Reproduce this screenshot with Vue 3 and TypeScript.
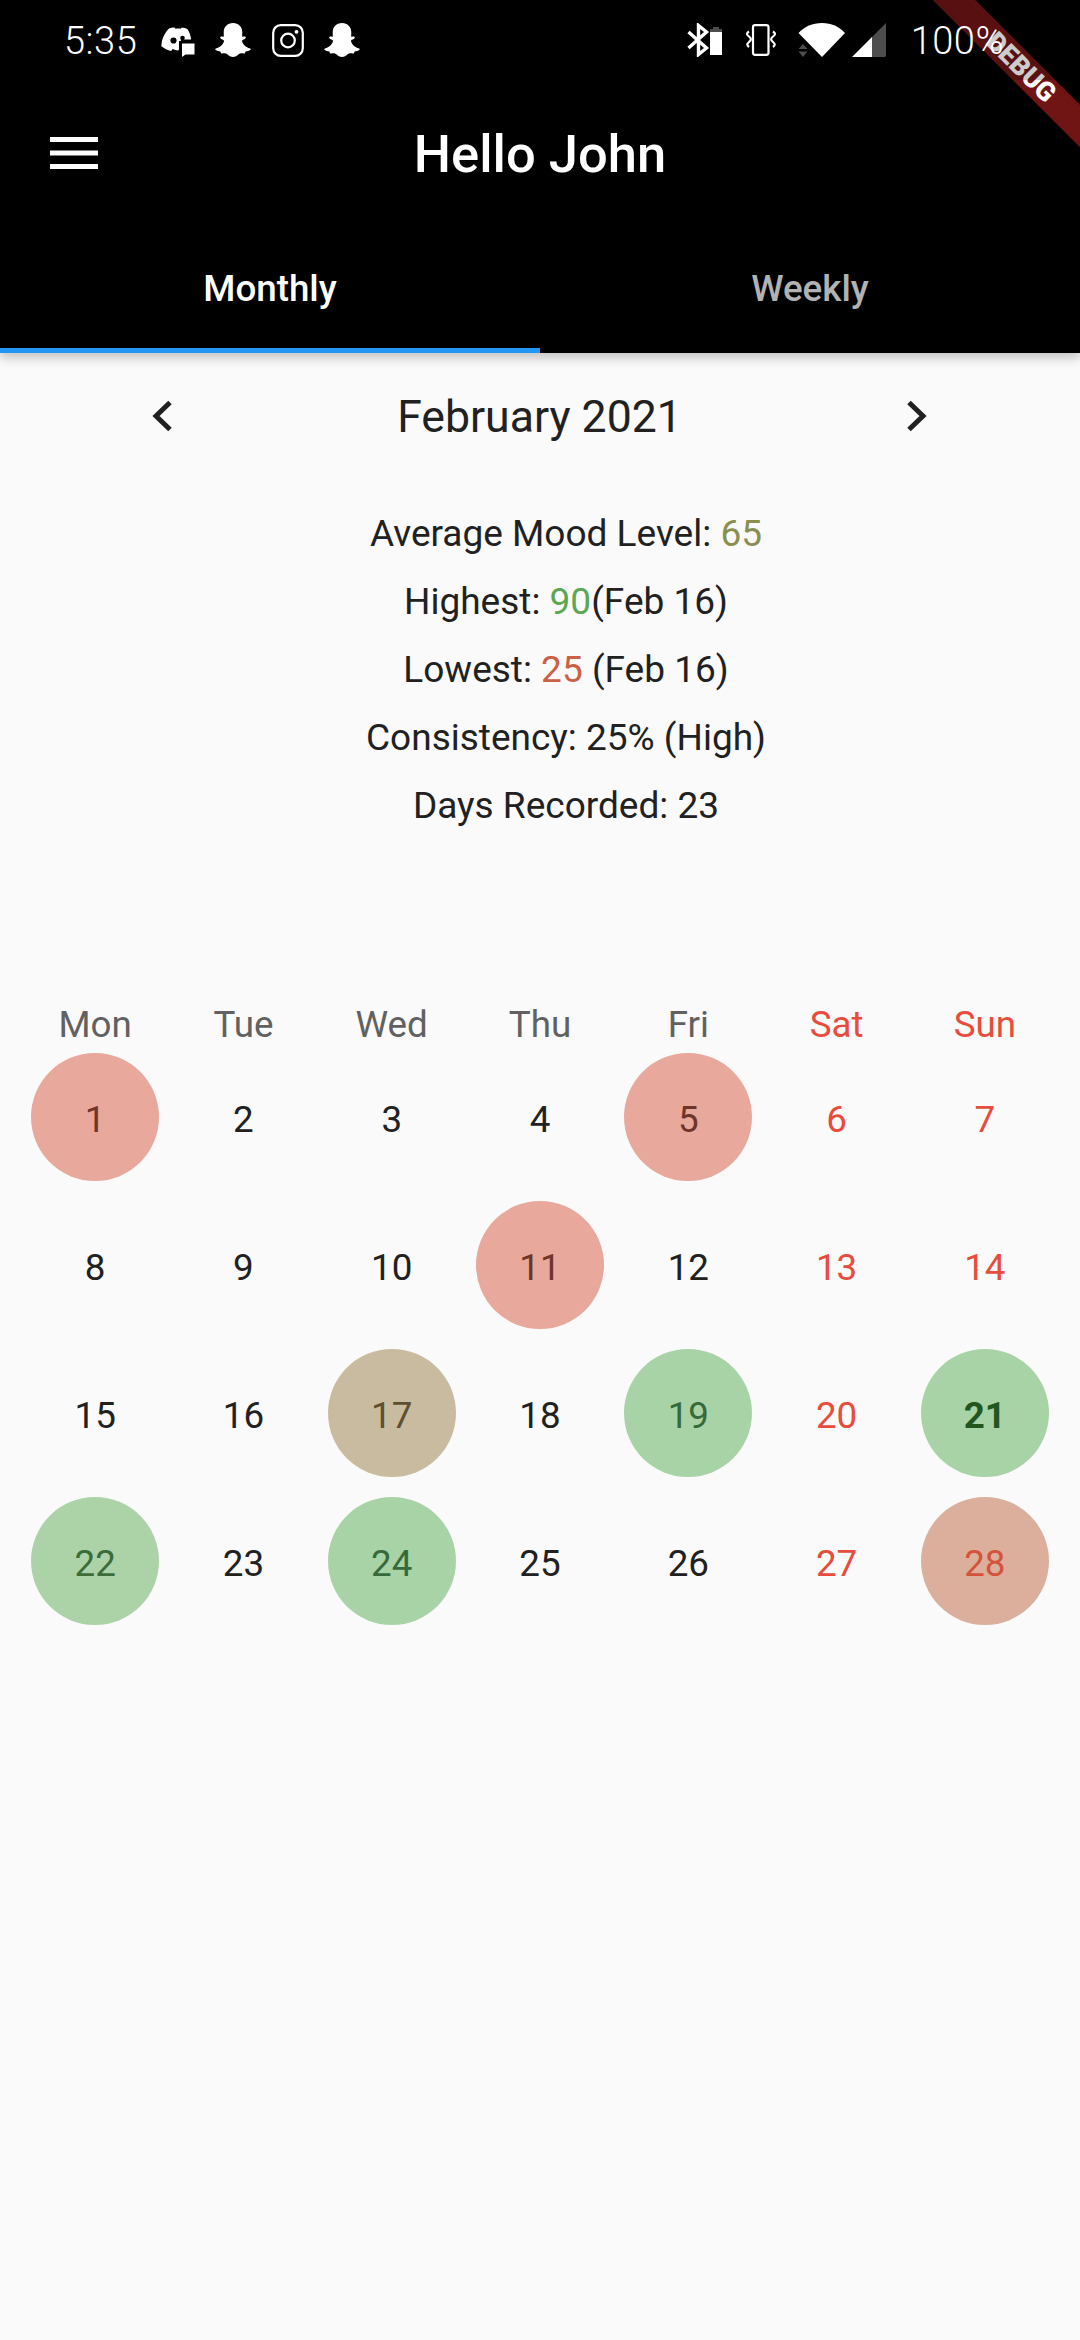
<template>
  <div class="screen">
    <header class="top">
      <div class="status">
        <span class="clock">5:35</span>
        <svg class="ic-discord" viewBox="0 0 34 30">
          <path fill="#fff" d="M8 1.500c3-1.200 5-1.300 6-.6l.4.9c2-.3 3.400-.3 5.400 0l.4-.9c1.500-.4 4 .1 6.300 1.300 2 3 3.200 6.500 3.600 10.300H20l-.8 8.500c-1 .9-1.200 1.400-1.900 2.400-2.100-.1-3.800-.4-5.700-1.300l-1.500 1.800C6.500 23 3.200 21.600.4 19.200.5 13 2.800 7 8 1.500z"/>
          <circle cx="12.500" cy="13.500" r="3.100" fill="#000"/>
          <circle cx="21.500" cy="11" r="2.300" fill="#000"/>
          <path fill="#000" d="M18 14h16v16H18z"/>
          <path fill="#fff" d="M21 16.500h12.500v11H24.500L21 30z"/>
        </svg>
        <svg class="ic-snap" viewBox="0 0 36 35">
          <path fill="#fff" d="M18 0c5.600 0 9.300 4 9.300 9.300 0 1.500-.1 3-.2 4.300 1 .5 2.400-.5 3.300.2.800.7.200 1.600-.7 2.100-1 .6-2.700 1-2.700 2 .6 3 3.700 6.600 8.100 7.500.8.200.9 1 .2 1.500-1.200.8-3 1.200-4.700 1.500-.5.800-.3 1.900-1.100 2-1.400.2-2.900-.3-4.400.1-1.900.5-3.300 3.500-7.100 3.500s-5.200-3-7.100-3.500c-1.500-.4-3 .1-4.400-.1-.8-.1-.6-1.200-1.100-2-1.700-.3-3.500-.7-4.700-1.500-.7-.5-.6-1.300.2-1.500 4.400-.9 7.500-4.500 8.100-7.500 0-1-1.700-1.400-2.700-2-.9-.5-1.500-1.400-.7-2.100.9-.7 2.300.3 3.300-.2-.1-1.300-.2-2.800-.2-4.300C8.700 4 12.400 0 18 0z"/>
        </svg>
        <svg class="ic-insta" viewBox="0 0 32 33" fill="none" stroke="#fff">
          <rect x="1.200" y="1.200" width="29.600" height="30.600" rx="7.500" stroke-width="2.200"/>
          <circle cx="16" cy="16.500" r="6.800" stroke-width="2.200"/>
          <circle cx="24.500" cy="7.800" r="1.900" fill="#fff" stroke="none"/>
        </svg>
        <svg class="ic-snap" viewBox="0 0 36 35">
          <path fill="#fff" d="M18 0c5.600 0 9.300 4 9.300 9.300 0 1.500-.1 3-.2 4.300 1 .5 2.400-.5 3.300.2.800.7.200 1.600-.7 2.100-1 .6-2.700 1-2.700 2 .6 3 3.700 6.600 8.100 7.500.8.200.9 1 .2 1.500-1.200.8-3 1.200-4.700 1.500-.5.800-.3 1.900-1.100 2-1.400.2-2.900-.3-4.400.1-1.900.5-3.300 3.500-7.100 3.500s-5.200-3-7.100-3.500c-1.500-.4-3 .1-4.400-.1-.8-.1-.6-1.200-1.100-2-1.700-.3-3.500-.7-4.700-1.500-.7-.5-.6-1.300.2-1.500 4.400-.9 7.500-4.500 8.100-7.500 0-1-1.700-1.400-2.700-2-.9-.5-1.500-1.400-.7-2.100.9-.7 2.300.3 3.300-.2-.1-1.300-.2-2.800-.2-4.300C8.700 4 12.400 0 18 0z"/>
        </svg>
        <div class="status-right">
          <svg class="ic-bt" viewBox="0 0 36 34">
            <path fill="none" stroke="#fff" stroke-width="3.400" d="M1.500 9l18 16-8 6.500V2.500l8 6.500-18 16"/>
            <path fill="#fff" d="M23 9h12v23H23z"/>
            <path fill="#4d4d4d" d="M26 4h6v2h3v3H23V6h3z"/>
          </svg>
          <svg class="ic-vib" viewBox="0 0 34 32" fill="none" stroke="#fff">
            <rect x="9" y="1.200" width="15.500" height="29.600" rx="2" stroke-width="2.200"/>
            <path stroke-width="2.200" d="M5 7.500c-3 2-2.500 3 0 5 2.500 2 2.500 3.500 0 5.500-2.500 2-2 3.500 0 5M29 7.500c3 2 2.500 3 0 5-2.500 2-2.500 3.500 0 5.500 2.500 2 2 3.500 0 5"/>
          </svg>
          <svg class="ic-wifi" viewBox="0 0 47 34">
            <path fill="#fff" d="M24 34L0.500 10C6.500 3.500 14.500 0 24 0s17 3.500 23 10z"/>
            <path fill="#4d4d4d" d="M5 21l4.500 5H.5zM.5 28.500h9L5 34z"/>
          </svg>
          <svg class="ic-signal" viewBox="0 0 34 34">
            <path fill="#4d4d4d" d="M34 0v32.500c0 .9-.6 1.500-1.500 1.500H19V15z"/>
            <path fill="#fff" d="M0 34l20-20v20z"/>
          </svg>
          <span class="clock">100%</span>
        </div>
      </div>
      <div class="toolbar">
        <svg class="menu" viewBox="0 0 48 32"><path fill="#fff" d="M0 0h48v5H0zM0 13.500h48v5H0zM0 27h48v5H0z"/></svg>
        <h1>Hello John</h1>
      </div>
      <div class="tabs">
        <div v-for="tab in tabs" :key="tab" class="tab" :class="{ active: tab === 'Monthly' }">{{ tab }}</div>
      </div>
    </header>

    <div class="month-nav">
      <svg class="chev" viewBox="0 0 20 32"><path d="M18 2.500L4 16l14 13.500" fill="none" stroke="#212121" stroke-width="5"/></svg>
      <span>February 2021</span>
      <svg class="chev" viewBox="0 0 20 32"><path d="M2 2.500L16 16 2 29.500" fill="none" stroke="#212121" stroke-width="5"/></svg>
    </div>

    <div class="stats">
      <p>Average Mood Level: <span class="olive">65</span></p>
      <p>Highest: <span class="green">90</span>(Feb 16)</p>
      <p>Lowest: <span class="rust">25</span> (Feb 16)</p>
      <p>Consistency: 25% (High)</p>
      <p>Days Recorded: 23</p>
    </div>

    <div class="calendar">
      <div v-for="(d, i) in weekdays" :key="d" class="dow" :class="{ weekend: i > 4 }">{{ d }}</div>
      <div v-for="cell in cells" :key="cell.day" class="cell" :class="{ weekend: cell.weekend }">
        <span class="day" :class="cell.tone">{{ cell.day }}</span>
      </div>
    </div>

    <div class="banner"><span>DEBUG</span></div>
  </div>
</template>

<script setup lang="ts">
const tabs = ['Monthly', 'Weekly']
const weekdays = ['Mon', 'Tue', 'Wed', 'Thu', 'Fri', 'Sat', 'Sun']

const tones: Record<number, string> = {
  1: 'low',
  5: 'low',
  11: 'low',
  17: 'mid',
  19: 'good',
  21: 'good today',
  22: 'fair',
  24: 'good',
  28: 'poor'
}

const cells = Array.from({ length: 28 }, (_, i) => ({
  day: i + 1,
  weekend: i % 7 > 4,
  tone: tones[i + 1] ?? ''
}))
</script>

<style>
html,
body {
  margin: 0;
  background: #fafafa;
}
</style>

<style scoped>
.screen {
  position: relative;
  width: 1080px;
  height: 2340px;
  overflow: hidden;
  background: #fafafa;
  color: #212121;
  font-family: Roboto, "Liberation Sans", sans-serif;
}

.top {
  background: #000;
  color: #fff;
  box-shadow: 0 5px 10px rgba(0, 0, 0, 0.22);
}

/* translucent scrim, sits above the debug ribbon */
.status {
  position: relative;
  z-index: 2;
  height: 80px;
  display: flex;
  align-items: center;
  padding: 0 76px 0 64px;
  background: rgba(0, 0, 0, 0.2);
}

.clock {
  margin-top: 2px;
  font-size: 38px;
  font-weight: 300;
  line-height: 1;
  letter-spacing: 0.5px;
}

.ic-discord {
  width: 34px;
  height: 30px;
  margin: 4px 0 0 24px;
}

.ic-snap {
  width: 36px;
  height: 35px;
  margin-left: 20px;
}

.ic-insta {
  width: 32px;
  height: 33px;
  margin-left: 21px;
}

.status-right {
  margin-left: auto;
  display: flex;
  align-items: center;
}

.ic-bt {
  width: 36px;
  height: 34px;
}

.ic-vib {
  width: 34px;
  height: 32px;
  margin-left: 21px;
}

.ic-wifi {
  width: 47px;
  height: 34px;
  margin-left: 20px;
}

.ic-signal {
  width: 34px;
  height: 34px;
  margin-left: 7px;
}

.status-right .clock {
  margin-left: 25px;
}

.toolbar {
  position: relative;
  height: 147px;
  display: flex;
  align-items: center;
  justify-content: center;
}

.menu {
  position: absolute;
  left: 50px;
  top: 57px;
  width: 48px;
  height: 32px;
}

h1 {
  margin: 0;
  font-size: 52.5px;
  font-weight: 500;
}

.tabs {
  display: flex;
  height: 126px;
}

.tab {
  flex: 1;
  display: flex;
  align-items: center;
  justify-content: center;
  box-sizing: border-box;
  padding-bottom: 3px;
  font-size: 36.75px;
  font-weight: 500;
  color: #b2b2b2;
}

.tab.active {
  color: #fff;
  padding-bottom: 0;
  padding-top: 2px;
  border-bottom: 5px solid #2196f3;
}

.month-nav {
  display: flex;
  align-items: center;
  justify-content: space-between;
  height: 126px;
  padding: 0 153px 0 152px;
  font-size: 44.6px;
}

.month-nav span {
  padding-top: 2px;
}

.chev {
  width: 20px;
  height: 32px;
}

.stats {
  margin-top: 21px;
  padding-left: 52px;
  text-align: center;
  font-size: 37px;
}

.stats p {
  margin: 0;
  height: 68px;
  line-height: 68px;
}

.olive {
  color: #8a8f50;
}

.green {
  color: #5aa854;
}

.rust {
  color: #cc6044;
}

.calendar {
  display: grid;
  grid-template-columns: repeat(7, 1fr);
  margin-top: 167px;
  padding: 0 21px;
  font-size: 36.75px;
}

.dow {
  height: 36px;
  line-height: 36px;
  text-align: center;
  color: #616161;
}

.dow.weekend,
.cell.weekend {
  color: #e74c3c;
}

.cell {
  height: 148px;
  display: flex;
  align-items: center;
  justify-content: center;
}

.day {
  width: 128px;
  height: 128px;
  border-radius: 50%;
  display: flex;
  align-items: center;
  justify-content: center;
  padding-top: 5px;
  box-sizing: border-box;
}

.low {
  background: #e8a89b;
  color: #70352a;
}

.mid {
  background: #c9bb9f;
  color: #5f4f30;
}

.good {
  background: #a7d3a6;
  color: #38693a;
}

.fair {
  background: #acd2a8;
  color: #3c6c38;
}

.poor {
  background: #dbaf9c;
  color: #d4533d;
}

.today {
  color: #23551f;
  font-weight: 700;
}

.banner {
  position: absolute;
  z-index: 1;
  top: 48px;
  left: 897px;
  width: 240px;
  height: 30px;
  transform: rotate(45deg);
  background: #701414;
  display: flex;
  align-items: center;
  justify-content: center;
  padding-left: 12px;
  box-sizing: border-box;
  font-size: 26.8px;
  font-weight: 900;
  line-height: 1;
  color: #fff;
}
</style>
